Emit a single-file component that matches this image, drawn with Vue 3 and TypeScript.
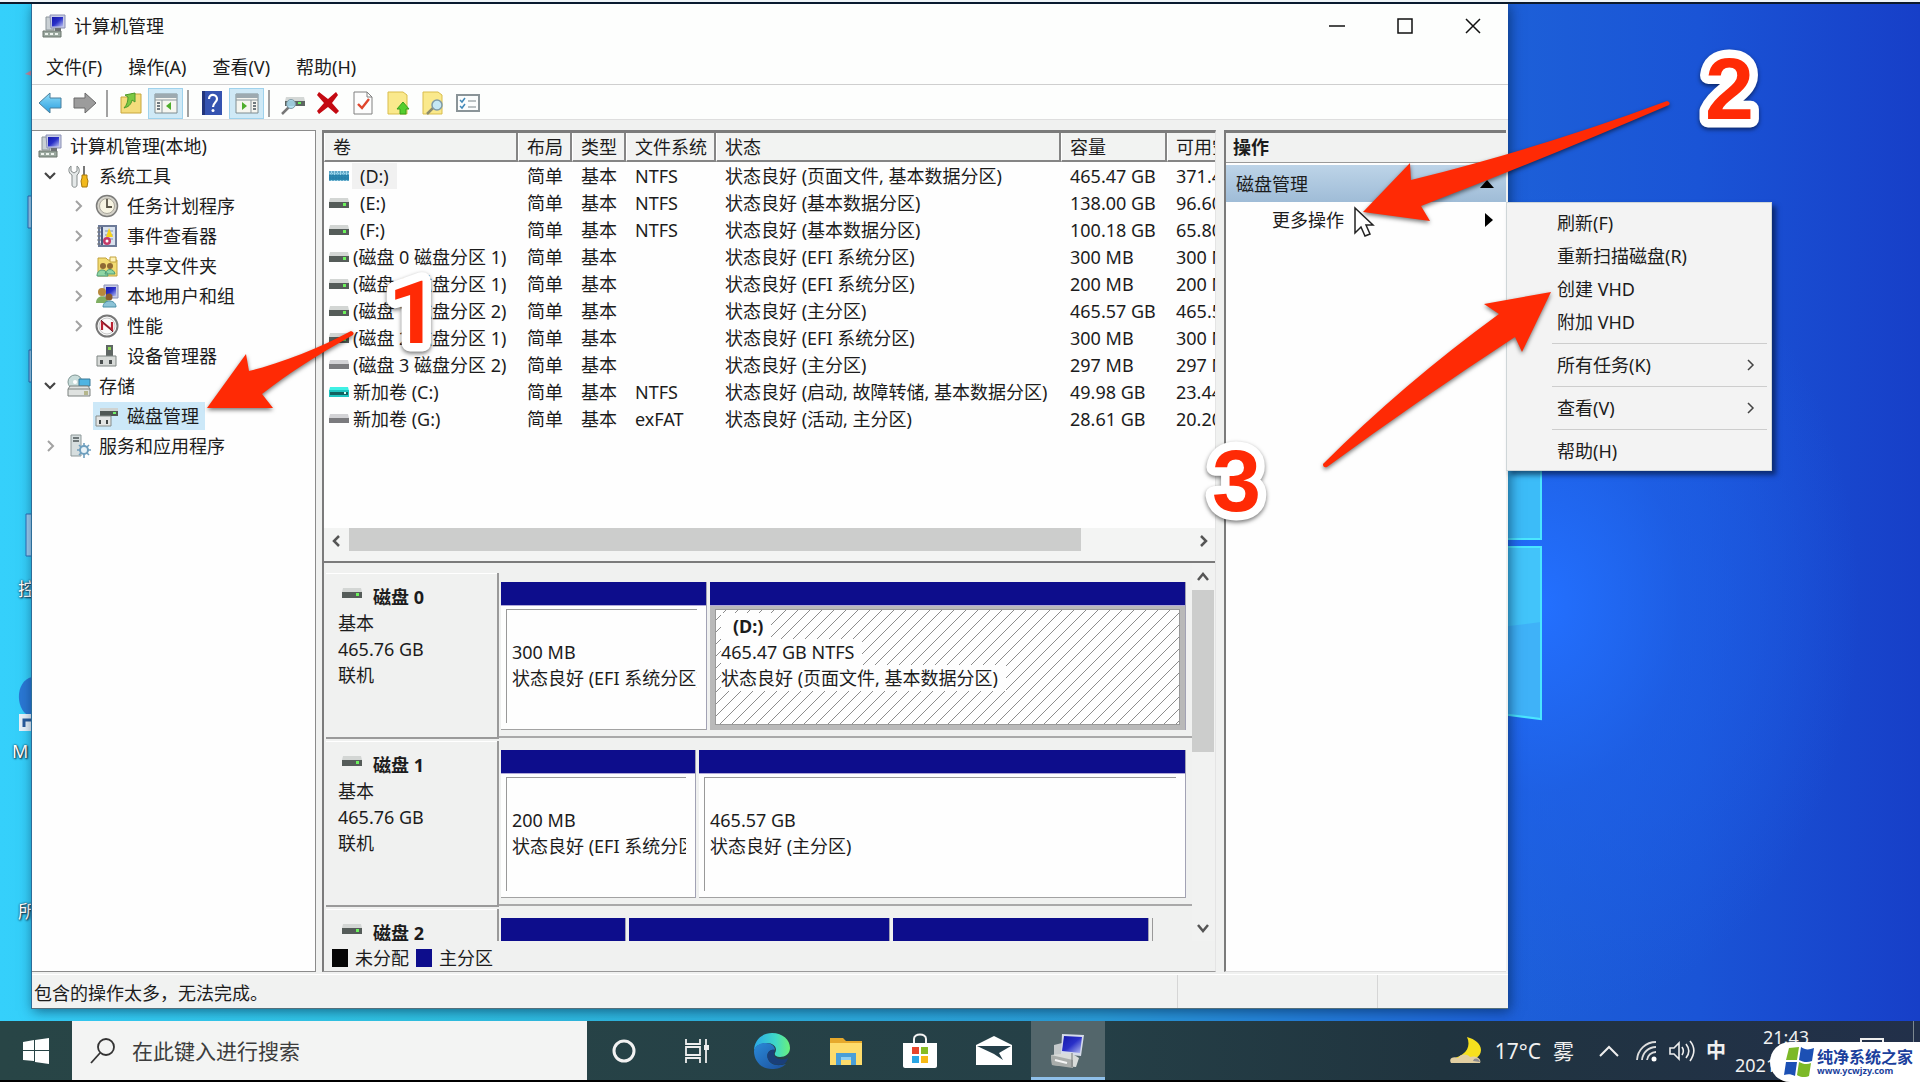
<script setup lang="ts">
import { ref } from 'vue'

interface Tool { icon: string; label: string; on?: boolean; sepAfter?: boolean }
interface TreeItem { label: string; icon: string; level: number; arrow?: 'open' | 'closed'; selected?: boolean }
interface Volume { icon: string; name: string; fs: string; status: string; size: string; free: string; drive?: boolean; focus?: boolean }
interface Partition { share: number; name?: string; size?: string; status?: string; hatched?: boolean; blank?: boolean }
interface Disk { name: string; size: string; parts: Partition[] }

const menus = ['文件(F)', '操作(A)', '查看(V)', '帮助(H)']

const tools: Tool[] = [
  { icon: 't-back', label: '后退' },
  { icon: 't-forward', label: '前进', sepAfter: true },
  { icon: 't-folder', label: '上一级' },
  { icon: 't-tree', label: '显示控制台树', on: true, sepAfter: true },
  { icon: 't-help', label: '帮助' },
  { icon: 't-pane', label: '显示操作窗格', on: true, sepAfter: true },
  { icon: 't-drive', label: '重新扫描' },
  { icon: 't-delete', label: '删除' },
  { icon: 't-props', label: '属性' },
  { icon: 't-up', label: '打开' },
  { icon: 't-find', label: '浏览' },
  { icon: 't-list', label: '设置' },
]

const tree: TreeItem[] = [
  { label: '计算机管理(本地)', icon: 'i-computer', level: 0 },
  { label: '系统工具', icon: 'i-tools', level: 1, arrow: 'open' },
  { label: '任务计划程序', icon: 'i-clock', level: 2, arrow: 'closed' },
  { label: '事件查看器', icon: 'i-event', level: 2, arrow: 'closed' },
  { label: '共享文件夹', icon: 'i-share', level: 2, arrow: 'closed' },
  { label: '本地用户和组', icon: 'i-users', level: 2, arrow: 'closed' },
  { label: '性能', icon: 'i-perf', level: 2, arrow: 'closed' },
  { label: '设备管理器', icon: 'i-device', level: 2 },
  { label: '存储', icon: 'i-storage', level: 1, arrow: 'open' },
  { label: '磁盘管理', icon: 'i-disk', level: 2, selected: true },
  { label: '服务和应用程序', icon: 'i-services', level: 1, arrow: 'closed' },
]

const volumes: Volume[] = [
  { icon: 'd-sel', name: '(D:)', fs: 'NTFS', status: '状态良好 (页面文件, 基本数据分区)', size: '465.47 GB', free: '371.44 GB', drive: true, focus: true },
  { icon: 'd-on', name: '(E:)', fs: 'NTFS', status: '状态良好 (基本数据分区)', size: '138.00 GB', free: '96.60 GB', drive: true },
  { icon: 'd-on', name: '(F:)', fs: 'NTFS', status: '状态良好 (基本数据分区)', size: '100.18 GB', free: '65.80 GB', drive: true },
  { icon: 'd-on', name: '(磁盘 0 磁盘分区 1)', fs: '', status: '状态良好 (EFI 系统分区)', size: '300 MB', free: '300 MB' },
  { icon: 'd-on', name: '(磁盘 1 磁盘分区 1)', fs: '', status: '状态良好 (EFI 系统分区)', size: '200 MB', free: '200 MB' },
  { icon: 'd-on', name: '(磁盘 1 磁盘分区 2)', fs: '', status: '状态良好 (主分区)', size: '465.57 GB', free: '465.57 GB' },
  { icon: 'd-on', name: '(磁盘 2 磁盘分区 1)', fs: '', status: '状态良好 (EFI 系统分区)', size: '300 MB', free: '300 MB' },
  { icon: 'd-off', name: '(磁盘 3 磁盘分区 2)', fs: '', status: '状态良好 (主分区)', size: '297 MB', free: '297 MB' },
  { icon: 'd-sys', name: '新加卷 (C:)', fs: 'NTFS', status: '状态良好 (启动, 故障转储, 基本数据分区)', size: '49.98 GB', free: '23.44 GB' },
  { icon: 'd-off', name: '新加卷 (G:)', fs: 'exFAT', status: '状态良好 (活动, 主分区)', size: '28.61 GB', free: '20.20 GB' },
]

const disks: Disk[] = [
  {
    name: '磁盘 0', size: '465.76 GB', parts: [
      { share: 205, size: '300 MB', status: '状态良好 (EFI 系统分区)' },
      { share: 475, name: '(D:)', size: '465.47 GB NTFS', status: '状态良好 (页面文件, 基本数据分区)', hatched: true },
    ],
  },
  {
    name: '磁盘 1', size: '465.76 GB', parts: [
      { share: 194, size: '200 MB', status: '状态良好 (EFI 系统分区)' },
      { share: 486, size: '465.57 GB', status: '状态良好 (主分区)' },
    ],
  },
  {
    name: '磁盘 2', size: '', parts: [
      { share: 124 }, { share: 260 }, { share: 255 }, { share: 33, blank: true },
    ],
  },
]

const menuGroups = [
  [{ label: '刷新(F)' }, { label: '重新扫描磁盘(R)' }, { label: '创建 VHD' }, { label: '附加 VHD' }],
  [{ label: '所有任务(K)', sub: true }],
  [{ label: '查看(V)', sub: true }],
  [{ label: '帮助(H)' }],
] as { label: string; sub?: boolean }[][]

const apps = [
  { icon: 'a-cortana', label: 'Cortana' },
  { icon: 'a-tasks', label: '任务视图' },
  { icon: 'a-edge', label: 'Microsoft Edge' },
  { icon: 'a-explorer', label: '文件资源管理器' },
  { icon: 'a-store', label: 'Microsoft Store' },
  { icon: 'a-mail', label: '邮件' },
  { icon: 'a-mmc', label: '计算机管理', active: true },
]

const query = ref('')
</script>

<template>
  <svg class="sprite" aria-hidden="true">
    <defs>
      <linearGradient id="g-screen" x1="0" y1="0" x2="1" y2="1">
        <stop offset="0" stop-color="#1418a8" /><stop offset=".5" stop-color="#2a30c8" /><stop offset="1" stop-color="#b8c0f0" />
      </linearGradient>
      <linearGradient id="g-blue" x1="0" y1="0" x2="0" y2="1">
        <stop offset="0" stop-color="#8fdcf8" /><stop offset="1" stop-color="#2a9fe0" />
      </linearGradient>
      <linearGradient id="g-edge" x1="0" y1="0" x2="1" y2="0">
        <stop offset="0" stop-color="#2aa8e8" /><stop offset=".6" stop-color="#3fd8c8" /><stop offset="1" stop-color="#6af07a" />
      </linearGradient>
      <linearGradient id="g-edge2" x1="0" y1="0" x2="1" y2="1">
        <stop offset="0" stop-color="#2a8ad8" /><stop offset="1" stop-color="#1c4f9c" />
      </linearGradient>
      <pattern id="g-hatch" width="12" height="12" patternUnits="userSpaceOnUse">
        <path d="M-2 14L14 -2M-2 2L2 -2M10 14L14 10" stroke="#8c8c8c" fill="none" />
      </pattern>

      <symbol id="i-computer" viewBox="0 0 24 24">
        <path d="M4 3h8v13H4z" fill="#c9d0d4" stroke="#8b9499" />
        <path d="M8 1h15v13H9z" fill="#c7cbe6" stroke="#8a90b4" />
        <path d="M10 3h11v9.500H10z" fill="url(#g-screen)" />
        <path d="M1 17h18v6H1z" fill="#9aa79e" stroke="#6c776f" />
        <path d="M3 20h3M8 20h3M13 20h3" stroke="#eef3ee" stroke-width="2" />
        <path d="M13 14h6v3h-6z" fill="#6e7275" />
      </symbol>
      <symbol id="i-tools" viewBox="0 0 24 24">
        <path d="M4 2v5l3 2 3-2V2c3 2 3 7 0 9v10c0 3-5 3-5 0V11C1 9 1 4 4 2z" fill="#e4e8e8" stroke="#868c8c" />
        <path d="M17 2v9" stroke="#777" stroke-width="2" /><path d="M15 11h5v3l1 3-1 6h-5l-1-6 1-3z" fill="#f2b91c" stroke="#a8780c" />
      </symbol>
      <symbol id="i-clock" viewBox="0 0 24 24">
        <circle cx="12" cy="12" r="10.500" fill="#d5d3ca" stroke="#7c7c7a" stroke-width="1.500" /><circle cx="12" cy="12" r="7.500" fill="#f7f4e2" stroke="#aaa79c" />
        <path d="M12 5v8h5" fill="none" stroke="#5a5648" stroke-width="1.800" />
      </symbol>
      <symbol id="i-event" viewBox="0 0 24 24">
        <path d="M4 2h17v20H4z" fill="#d9e2ee" stroke="#6c7a98" stroke-width="2" /><path d="M7 3v18" stroke="#4b5a80" stroke-width="2" />
        <path d="M2 4h4M2 8h4M2 12h4M2 16h4M2 20h4" stroke="#777" /><path d="M10 7h8M10 11h8M10 15h8" stroke="#7d91b5" />
        <path d="M14 4l4 9h-7z" fill="#f6d21c" /><circle cx="12" cy="17" r="4" fill="#c43a68" /><circle cx="12" cy="17" r="1.500" fill="#fff" />
      </symbol>
      <symbol id="i-share" viewBox="0 0 24 24">
        <path d="M3 4h8l2 2h9v16H3z" fill="#f3dc72" stroke="#c2a23c" /><path d="M15 3h6v5h-6z" fill="#fff3b8" stroke="#c2a23c" />
        <circle cx="8" cy="12" r="3" fill="#8f6a34" /><circle cx="15" cy="12" r="3" fill="#8f6a34" />
        <path d="M2 22c0-8 10-8 11 0zM10 20c1-6 9-6 10 0z" fill="#8fd6a4" stroke="#4d9a78" />
      </symbol>
      <symbol id="i-users" viewBox="0 0 24 24">
        <path d="M9 1h14v13H9z" fill="#c7cbe6" stroke="#8a90b4" /><path d="M11 3h10v9H11z" fill="url(#g-screen)" />
        <circle cx="7" cy="8" r="4" fill="#b8883c" /><path d="M1 19c0-9 12-9 12 0z" fill="#7fae62" />
        <circle cx="14" cy="13" r="3.500" fill="#8a5c2c" /><path d="M8 23c0-8 13-8 13 0z" fill="#8cc3d6" stroke="#4a8fa8" />
      </symbol>
      <symbol id="i-perf" viewBox="0 0 24 24">
        <circle cx="12" cy="12" r="10.500" fill="#fbfbfb" stroke="#777" stroke-width="2" /><circle cx="12" cy="12" r="8" fill="none" stroke="#c9c9c9" />
        <path d="M7 16V8l10 8V8" fill="none" stroke="#b82232" stroke-width="2.200" /><path d="M6 6l12 12" stroke="#6c2430" />
      </symbol>
      <symbol id="i-device" viewBox="0 0 24 24">
        <path d="M11 1h7v13h-7z" fill="#5f6664" /><path d="M13 3h3v3h-3z" fill="#8fd85a" />
        <path d="M2 12h19v10H2z" fill="#d7dad8" stroke="#7f8583" /><path d="M5 16h3v4H5zM14 16h3v4h-3z" fill="#4b5050" />
      </symbol>
      <symbol id="i-storage" viewBox="0 0 24 24">
        <circle cx="8" cy="8" r="7" fill="#c8dcda" stroke="#7f9694" /><circle cx="8" cy="8" r="2" fill="#fff" />
        <path d="M12 5h11v7H12z" fill="#4fb4e2" stroke="#3b7896" /><path d="M1 15l2-3h18l2 3v7H1z" fill="#dfe2e0" stroke="#7c8280" />
        <path d="M1 15h22" stroke="#7c8280" /><path d="M18 17v4M20 17v4" stroke="#8a8a3a" />
      </symbol>
      <symbol id="i-disk" viewBox="0 0 24 24">
        <path d="M5 4h18v3H5z" fill="#cfd3d1" /><path d="M5 7h18v5H5z" fill="#4f5653" /><path d="M18 8h3v2h-3z" fill="#6ff06a" />
        <path d="M1 12h15v10H1z" fill="#e3e5e4" stroke="#858b89" /><path d="M4 16h2v4H4zM11 16h2v4h-2z" fill="#3f4444" />
      </symbol>
      <symbol id="i-services" viewBox="0 0 24 24">
        <path d="M4 1h10v21H4z" fill="#d6dedf" stroke="#8d9899" /><path d="M6 4h6M6 7h6" stroke="#4c5658" stroke-width="1.500" />
        <circle cx="17" cy="16" r="4" fill="#e8f2f8" stroke="#6f9fbe" stroke-width="2" />
        <path d="M17 9v3M17 20v4M10 16h3M21 16h3M12 11l2 2M20 19l2 2M22 11l-2 2M14 19l-2 2" stroke="#6f9fbe" stroke-width="1.600" />
      </symbol>

      <symbol id="d-on" viewBox="0 0 20 10"><path d="M1 0h18l1 4H0z" fill="#d3d6d4" /><path d="M0 4h20v6H0z" fill="#555c59" /><path d="M14 5h3v3h-3z" fill="#6cf25c" /></symbol>
      <symbol id="d-off" viewBox="0 0 20 10"><path d="M1 0h18l1 4H0z" fill="#d3d3d6" /><path d="M0 4h20v5H0z" fill="#7b7b7e" /></symbol>
      <symbol id="d-sys" viewBox="0 0 20 10"><path d="M1 0h18l1 4H0z" fill="#3ff0e4" /><path d="M0 3h20v7H0z" fill="#1fc4c0" /><path d="M1 5h18v3H1z" fill="#14605f" /><path d="M15 5h2v2h-2z" fill="#d4fff4" /></symbol>
      <symbol id="d-sel" viewBox="0 0 20 10">
        <path d="M0 0h20v10H0z" fill="#9fd6ea" /><path d="M0 4h20v5H0z" fill="#2a86ae" />
        <path d="M1 0v10M4 0v10M7 0v10M10 0v10M13 0v10M16 0v10M19 0v10" stroke="#2479a4" stroke-dasharray="2 1" /><path d="M0 3h20" stroke="#3d9bc0" stroke-dasharray="1 1" />
      </symbol>

      <symbol id="t-back" viewBox="0 0 24 24"><path d="M1 12L12 2v5h11v10H12v5z" fill="url(#g-blue)" stroke="#4a7f9c" /></symbol>
      <symbol id="t-forward" viewBox="0 0 24 24"><path d="M23 12L12 2v5H1v10h11v5z" fill="#9c9c9c" stroke="#6a6a6a" /></symbol>
      <symbol id="t-folder" viewBox="0 0 24 24"><path d="M2 6h8l2-3h10v19H2z" fill="#f4dc7c" stroke="#c8a63c" /><path d="M5 17c4-1 7-3 8-8l3 2V2L6 4l3 2c0 4-1 8-4 11z" fill="#7cc842" stroke="#4c9a2c" /></symbol>
      <symbol id="t-tree" viewBox="0 0 24 24"><path d="M1 3h22v19H1z" fill="#f6f6f0" stroke="#7f8c90" /><path d="M1 3h22v4H1z" fill="#9daab0" /><path d="M1 9h22" stroke="#8b979c" /><path d="M3 12h3M3 15h3M3 18h3" stroke="#46525a" stroke-width="1.500" /><path d="M8 9v13" stroke="#8b979c" /><path d="M17 11v8l-5-4z" fill="#4fae2c" /></symbol>
      <symbol id="t-pane" viewBox="0 0 24 24"><path d="M1 3h22v19H1z" fill="#f6f6f0" stroke="#7f8c90" /><path d="M1 3h22v4H1z" fill="#9daab0" /><path d="M1 9h22" stroke="#8b979c" /><path d="M18 12h3M18 15h3M18 18h3" stroke="#46525a" stroke-width="1.500" /><path d="M16 9v13" stroke="#8b979c" /><path d="M7 11v8l5-4z" fill="#4fae2c" /></symbol>
      <symbol id="t-help" viewBox="0 0 24 24"><path d="M2 0h20v24H2z" fill="#3553b0" /><path d="M2 0h3v24H2z" fill="#22357c" /><path d="M9 8c0-6 8-5 8 0 0 3-4 4-4 8" fill="none" stroke="#fff" stroke-width="2.200" /><circle cx="13" cy="19.500" r="1.500" fill="#fff" /></symbol>
      <symbol id="t-drive" viewBox="0 0 24 24"><path d="M5 6h18l1 4H4z" fill="#d4d8d6" /><path d="M4 10h20v5H4z" fill="#5d6662" /><path d="M17 11h3v2h-3z" fill="#66ee5a" /><path d="M1 23l7-7" stroke="#777" stroke-width="2.500" /><circle cx="10" cy="13" r="4.500" fill="#a8dcf0" fill-opacity=".85" stroke="#7f9aa6" /></symbol>
      <symbol id="t-delete" viewBox="0 0 24 24"><path d="M3 1l9 7 8-7 2 3-6 8 7 8-3 3-8-7-9 7-2-3 7-8-7-8z" fill="#c40a12" /></symbol>
      <symbol id="t-props" viewBox="0 0 24 24"><path d="M3 1h13l5 5v17H3z" fill="#fdfdfd" stroke="#808080" /><path d="M16 1v5h5" fill="none" stroke="#808080" /><path d="M7 13l4 4 7-9" fill="none" stroke="#e0452c" stroke-width="2.400" /></symbol>
      <symbol id="t-up" viewBox="0 0 24 24"><path d="M2 1h15l4 3v19H2z" fill="#fae98c" stroke="#d9bd4c" /><path d="M14 23v-5h-3l6-7 6 7h-3v5z" fill="#55cf2e" stroke="#3a9f1f" /></symbol>
      <symbol id="t-find" viewBox="0 0 24 24"><path d="M2 1h15l4 3v19H2z" fill="#fae98c" stroke="#d9bd4c" /><path d="M6 23l7-7" stroke="#8d8d6c" stroke-width="2.500" /><circle cx="16" cy="14" r="5" fill="#c5e8f4" stroke="#7f9aa6" stroke-width="1.500" /></symbol>
      <symbol id="t-list" viewBox="0 0 24 24"><path d="M1 4h22v16H1z" fill="#fbfdfd" stroke="#8a9498" stroke-width="2" /><path d="M4 9l2 2 3-4M4 15l2 2 3-4" fill="none" stroke="#3f88b8" stroke-width="1.500" /><path d="M12 10h8M12 16h8" stroke="#a5adb0" stroke-width="1.500" /></symbol>

      <symbol id="a-cortana" viewBox="0 0 36 36"><circle cx="18" cy="18" r="10" fill="none" stroke="#f2f2f2" stroke-width="3" /></symbol>
      <symbol id="a-tasks" viewBox="0 0 36 36"><path d="M6 6v5h14V6M6 30v-5h14v5M6 14h14v8H6zM26 6v24" fill="none" stroke="#eee" stroke-width="1.800" /><path d="M24 12h5v5h-5z" fill="#eee" /></symbol>
      <symbol id="a-edge" viewBox="0 0 36 36">
        <path d="M0 18C0 7 8 0 18 0c11 0 18 7 18 15 0 6-5 9-10 9-4 0-6-2-5-4 3-5-1-10-8-10C6 10 1 13 0 18z" fill="url(#g-edge)" />
        <path d="M0 18c1-5 6-8 12-8 5 0 9 3 9 7-6-1-9 4-7 9 2 5 8 8 18 5-4 4-9 5-14 5C7 36 0 28 0 18z" fill="url(#g-edge2)" />
        <path d="M14 26c-2-5 1-10 7-9-2 4-1 8 4 9 4 1 7 0 9-1-1 3-2 5-4 6-7 2-14 0-16-5z" fill="#1a3f78" />
      </symbol>
      <symbol id="a-explorer" viewBox="0 0 36 36"><path d="M2 5h13l3 3h16v24H2z" fill="#e6a92c" /><path d="M2 10h32v22H2z" fill="#fddc6c" /><path d="M8 20h20v12h-5v-5h-10v5H8z" fill="#4a9fd8" /><path d="M13 24h10v3H13z" fill="#8fd0f4" /></symbol>
      <symbol id="a-store" viewBox="0 0 36 36"><path d="M12 11V6c0-6 12-6 12 0v5" fill="none" stroke="#f4f4f4" stroke-width="2" /><path d="M1 10h34v23c0 1-1 2-2 2H3c-1 0-2-1-2-2z" fill="#fff" /><path d="M10 14h7v7h-7z" fill="#e8452c" /><path d="M19 14h7v7h-7z" fill="#86bc24" /><path d="M10 23h7v7h-7z" fill="#2aa6e4" /><path d="M19 23h7v7h-7z" fill="#f7b916" /></symbol>
      <symbol id="a-mail" viewBox="0 0 36 36"><path d="M0 12L18 3l18 9v20H0z" fill="#fff" /><path d="M1 13h34L23 20l4 7-9-6z" fill="#26404a" /></symbol>
      <symbol id="a-mmc" viewBox="0 0 36 36">
        <path d="M4 12l12-3v16L4 23z" fill="#c4c9cb" /><path d="M12 1l22 1-3 21-20-2z" fill="#d5dbea" /><path d="M14 3l18 1-2 16-18-2z" fill="url(#g-screen)" />
        <path d="M1 22l20-2 8 5-3 9-24-2z" fill="#d9dcda" /><path d="M1 22l22 5v8L2 32z" fill="#a9adab" /><path d="M5 27l12 3" stroke="#f5f5f5" stroke-width="2" /><path d="M22 20v14" stroke="#767a7a" />
      </symbol>
    </defs>
  </svg>

  <div class="desktop">
    <main class="workspace">
      <svg class="wallpaper" width="50" height="260" viewBox="0 0 50 260" aria-hidden="true">
        <path d="M0 0h40v78H0z" fill="#3cbcf8" /><path d="M0 78h40V0" fill="none" stroke="#4ae6ff" stroke-width="2" />
        <path d="M0 86h40v172L0 253z" fill="#3fb2f8" /><path d="M0 86h40v75L0 166z" fill="#42c4fa" />
        <path d="M0 86h40v172L0 253" fill="none" stroke="#4ae6ff" stroke-width="2" />
      </svg>
      <svg class="strip" width="32" height="760" viewBox="0 0 32 760" aria-hidden="true">
        <path d="M32 66l-7 4 7 2z" fill="#c88a9c" /><path d="M32 192h-4v32h4zM32 346h-3v32h3zM32 510h-6v42h6z" fill="#9fd0f2" stroke="#2a6fb8" />
        <path d="M32 673c-18 4-17 36 0 40z" fill="#2a78d4" /><path d="M19 710h13v17H19z" fill="#e8f2fa" /><path d="M24 723v-7h7" fill="none" stroke="#2a5c9c" stroke-width="3" />
      </svg>
      <span class="shortcut s1">控</span>
      <span class="shortcut s2">M</span>
      <span class="shortcut s3">所</span>

      <section class="window">
        <header class="titlebar">
          <svg class="ico24"><use href="#i-computer" /></svg>
          <h1>计算机管理</h1>
          <div class="winbtns">
            <button aria-label="最小化"><svg width="16" height="16"><path d="M0 8h16" stroke="#111" stroke-width="1.500" /></svg></button>
            <button aria-label="最大化"><svg width="16" height="16"><path d="M1 1h14v14H1z" fill="none" stroke="#111" stroke-width="1.500" /></svg></button>
            <button aria-label="关闭"><svg width="16" height="16"><path d="M1 1l14 14M15 1L1 15" stroke="#111" stroke-width="1.500" /></svg></button>
          </div>
        </header>
        <nav class="menubar"><button v-for="m in menus" :key="m">{{ m }}</button></nav>
        <div class="toolbar">
          <template v-for="t in tools" :key="t.icon">
            <button :class="{ on: t.on }" :aria-label="t.label"><svg class="ico24"><use :href="'#' + t.icon" /></svg></button>
            <i v-if="t.sepAfter" class="sep"></i>
          </template>
        </div>

        <div class="body">
          <aside class="tree">
            <ul>
              <li v-for="n in tree" :key="n.label" :class="['lv' + n.level, { selected: n.selected }]">
                <svg class="arrow" viewBox="0 0 14 14">
                  <path v-if="n.arrow === 'open'" d="M2 4l5 5 5-5" stroke="#444" stroke-width="2.200" fill="none" />
                  <path v-else-if="n.arrow === 'closed'" d="M5 2l5 5-5 5" stroke="#a2a2a2" stroke-width="2" fill="none" />
                </svg>
                <button><svg class="ico24"><use :href="'#' + n.icon" /></svg><span>{{ n.label }}</span></button>
              </li>
            </ul>
          </aside>

          <section class="center">
            <div class="volumes">
              <div class="tablewrap">
                <table>
                  <colgroup><col class="c1"><col class="c2"><col class="c2"><col class="c3"><col class="c4"><col class="c5"><col></colgroup>
                  <thead><tr><th>卷</th><th>布局</th><th>类型</th><th>文件系统</th><th>状态</th><th>容量</th><th>可用空间</th></tr></thead>
                  <tbody>
                    <tr v-for="v in volumes" :key="v.name">
                      <td class="name"><div><svg class="drive"><use :href="'#' + v.icon" /></svg><span :class="{ letter: v.drive, focus: v.focus }">{{ v.name }}</span></div></td>
                      <td>简单</td><td>基本</td><td>{{ v.fs }}</td><td>{{ v.status }}</td><td>{{ v.size }}</td><td>{{ v.free }}</td>
                    </tr>
                  </tbody>
                </table>
              </div>
              <div class="hscroll">
                <button aria-label="向左滚动"><svg width="14" height="14"><path d="M9 2L4 7l5 5" fill="none" stroke="#555" stroke-width="2.500" /></svg></button>
                <div class="track"><i></i></div>
                <button aria-label="向右滚动"><svg width="14" height="14"><path d="M5 2l5 5-5 5" fill="none" stroke="#555" stroke-width="2.500" /></svg></button>
              </div>
            </div>

            <div class="disks">
              <div class="disklist">
                <article v-for="d in disks" :key="d.name" class="disk">
                  <div class="label">
                    <h2><svg class="drive"><use href="#d-on" /></svg>{{ d.name }}</h2>
                    <template v-if="d.size"><p>基本</p><p>{{ d.size }}</p><p>联机</p></template>
                  </div>
                  <div class="parts">
                    <div v-for="(p, i) in d.parts" :key="i" :class="['part', { blank: p.blank, hatched: p.hatched }]" :style="{ flexGrow: p.share }">
                      <div class="bar"></div>
                      <div class="vol">
                        <svg v-if="p.hatched" class="hatch" width="100%" height="100%"><rect width="100%" height="100%" fill="url(#g-hatch)" /></svg>
                        <div v-if="p.size" class="inner">
                          <p class="pname"><b v-if="p.name">{{ p.name }}</b></p>
                          <p><span>{{ p.size }}</span></p>
                          <p><span>{{ p.status }}</span></p>
                        </div>
                      </div>
                    </div>
                  </div>
                </article>
              </div>
              <div class="vscroll">
                <button aria-label="向上滚动"><svg width="14" height="14"><path d="M2 10l5-6 5 6" fill="none" stroke="#555" stroke-width="2.500" /></svg></button>
                <div class="track"><i></i></div>
                <button aria-label="向下滚动"><svg width="14" height="14"><path d="M2 4l5 6 5-6" fill="none" stroke="#555" stroke-width="2.500" /></svg></button>
              </div>
            </div>
            <footer class="legend"><i class="black"></i><span>未分配</span><i class="navy"></i><span>主分区</span></footer>
          </section>

          <aside class="actions">
            <h2>操作</h2>
            <button class="group">磁盘管理<svg width="14" height="8"><path d="M0 8l7-8 7 8z" /></svg></button>
            <div class="more">
              <button>更多操作<svg width="8" height="14"><path d="M0 0l8 7-8 7z" /></svg></button>
              <div class="popup" role="menu">
                <div v-for="(g, gi) in menuGroups" :key="gi" class="pgroup">
                  <button v-for="it in g" :key="it.label" role="menuitem">{{ it.label }}<svg v-if="it.sub" width="8" height="12"><path d="M1 1l5 5-5 5" fill="none" stroke="#444" stroke-width="1.500" /></svg></button>
                </div>
              </div>
            </div>
          </aside>
        </div>
        <footer class="status"><span>包含的操作太多，无法完成。</span><span></span><span></span></footer>
      </section>
    </main>

    <footer class="taskbar">
      <button class="start" aria-label="开始"><svg width="26" height="26" viewBox="0 0 26 26"><path d="M0 4l11-2v10H0zM12 2l14-2v12H12zM0 13h11v10L0 22zM12 13h14v13l-14-2z" fill="#fff" /></svg></button>
      <label class="search">
        <svg width="26" height="26" viewBox="0 0 26 26"><circle cx="16" cy="9" r="8" fill="none" stroke="#333" stroke-width="1.800" /><path d="M10 15L1 25" stroke="#333" stroke-width="1.800" /></svg>
        <input v-model="query" type="text" placeholder="在此键入进行搜索" aria-label="在此键入进行搜索">
      </label>
      <button v-for="a in apps" :key="a.icon" :class="['app', { active: a.active }]" :aria-label="a.label"><svg width="36" height="36"><use :href="'#' + a.icon" /></svg></button>
      <div class="tray">
        <button class="weather">
          <svg width="34" height="30" viewBox="0 0 34 30"><path d="M18 1c4 9 0 17-12 21 8 5 26 3 26-8 0-6-6-11-14-13z" fill="#f6e01e" /><path d="M2 27c-3-5 3-7 7-5 3-5 10-4 12-1 6-2 12 2 10 6z" fill="#e2cfa2" /><path d="M24 25c1-4 6-3 7 1z" fill="#8c8c90" /></svg>
          <span>17°C</span><span>雾</span>
        </button>
        <button class="caret" aria-label="显示隐藏的图标"><svg width="20" height="12"><path d="M1 11l9-9 9 9" fill="none" stroke="#eee" stroke-width="2" /></svg></button>
        <button aria-label="网络"><svg width="22" height="22" viewBox="0 0 22 22"><g fill="none" stroke="#ddd" stroke-width="1.800"><path d="M1 20A19 19 0 0 1 20 2" /><path d="M6 20A14 14 0 0 1 20 7" /><path d="M11 20a9 9 0 0 1 9-8" /></g><circle cx="18" cy="19" r="2.500" fill="#fff" /></svg></button>
        <button aria-label="音量"><svg width="26" height="22" viewBox="0 0 26 22"><g fill="none" stroke="#eee" stroke-width="1.600"><path d="M1 8h4l5-5v16l-5-5H1zM13 7c2 3 2 5 0 8M17 4c4 5 4 9 0 14M21 1c5 6 5 13 0 20" /></g></svg></button>
        <button class="ime">中</button>
        <div class="clock"><time>21:43</time><time>2021</time></div>
        <button class="notice" aria-label="通知"><svg width="24" height="26" viewBox="0 0 24 26"><path d="M1 1h22v17H1z" fill="none" stroke="#eee" stroke-width="2" /></svg></button>
        <i class="peek"></i>
      </div>
      <div class="badge">
        <svg width="30" height="30" viewBox="0 0 30 30"><path d="M5 1l10-1-2 13H2z" fill="#7cb928" /><path d="M17 0c4 3 8 3 13 1l-2 13c-5 2-9 1-13-1z" fill="#1c50b4" /><path d="M2 15h11l-2 14c-4-2-7-2-11-1z" fill="#1c50b4" /><path d="M15 15c4 2 8 3 12 1l-2 13c-5 2-9 1-12-1z" fill="#7cb928" /></svg>
        <div><strong>纯净系统之家</strong><a href="#">www.ycwjzy.com</a></div>
      </div>
    </footer>

    <svg class="notes" viewBox="0 0 1920 1082" aria-hidden="true">
      <path d="M1355 208v25l6-6 4 9 5-2-4-9h7z" fill="#fff" stroke="#222" stroke-width="1.500" />
      <g fill="#ff2a05" class="lift">
        <path d="M207 408L246 354l3 17c36-9 70-23 102-40q4 1 2 4c-34 19-64 38-91 59l11 14z" />
        <path d="M1363 212l47-49 1 17q130-32 256-79 4 1 2 4-128 55-248 101l9 15z" />
        <path d="M1551 292l-67 12 15 10q-96 70-176 150 0 4 4 3 90-66 188-130l7 15z" />
      </g>
      <g class="digit lift">
        <text x="388" y="343" class="one">1</text>
        <text x="1705" y="119">2</text>
        <text x="1212" y="511">3</text>
      </g>
    </svg>
  </div>
</template>

<style>
html, body { margin: 0; background: #000; }
</style>

<style scoped>
* { box-sizing: border-box; }
.sprite { position: absolute; width: 0; height: 0; }
.desktop {
  position: relative; display: flex; flex-direction: column; min-height: 100vh; overflow: hidden;
  border-top: 2px solid #eef4f8;
  font: 18px/26px "Noto Sans", "Noto Sans CJK SC", sans-serif; color: #1c1c1c;
}
button { font: inherit; color: inherit; background: none; border: 0; padding: 0; margin: 0; text-align: left; }
h1, h2, p, ul { margin: 0; padding: 0; font: inherit; list-style: none; }
svg { display: block; flex: none; }
.ico24 { width: 24px; height: 24px; }
.drive { width: 20px; height: 10px; }

.workspace {
  position: relative; display: flex; flex: 1; padding: 0 412px 12px 31px; border-top: 2px solid #0c1a2c;
  background:
    radial-gradient(ellipse 320px 420px at 1540px 600px, #2370ff, #1f62ec99 45%, transparent 100%),
    linear-gradient(90deg, #35d0fb 0, #30c4e4 400px, #2a9cd8 1100px, #1d60d8 1500px, #1a54d6 1700px, #173fc8 100%);
}
.wallpaper { position: absolute; left: 1501px; top: 457px; }
.strip { position: absolute; left: 0; top: 0; }
.shortcut { position: absolute; color: #fff; text-shadow: 1px 1px 2px #123, 0 0 2px #123; }
.s1 { left: 18px; top: 572px; }
.s2 { left: 12px; top: 734px; }
.s3 { left: 18px; top: 894px; }

.window {
  position: relative; flex: 1; min-width: 0; display: flex; flex-direction: column; background: #fdfefd;
  border-left: 1px solid #2c6c98; border-bottom: 1px solid #54707c; box-shadow: 2px 2px 12px #00204099;
}
.titlebar { display: flex; align-items: center; height: 46px; padding: 0 27px 2px 10px; gap: 8px; }
.winbtns { display: flex; gap: 52px; margin-left: auto; }
.menubar { display: flex; gap: 26px; height: 35px; padding-left: 14px; align-items: center; border-bottom: 1px solid #cfcfcf; }
.toolbar { display: flex; align-items: center; height: 35px; padding: 2px 0 0 0; border-bottom: 1px solid #dedede; }
.toolbar button { width: 35px; height: 31px; display: grid; place-items: center; border: 1px solid transparent; }
.toolbar button.on { background: #cfe9f6; border-color: #9fd2ec; }
.sep { width: 2px; height: 27px; margin: 0 5px 0 4px; background: #a2a2a2; }

.body { flex: 1; display: grid; grid-template-columns: 284px 1fr 282px; column-gap: 6px; padding: 10px 2px 2px 0; background: #f0f1f0; min-height: 0; }
.tree { background: #fefefe; border: 1px solid #8b8b8b; border-left: 0; }
.tree li { display: flex; align-items: center; height: 30px; }
.tree button { display: flex; align-items: center; gap: 8px; height: 28px; padding: 0 6px 0 2px; white-space: nowrap; }
.arrow { width: 14px; height: 14px; margin-right: 8px; }
.lv0 .arrow { display: none; }
.lv0 { padding-left: 4px; }
.lv1 { padding-left: 11px; }
.lv2 { padding-left: 39px; }
.selected button { background: #cce8f8; }

.center { display: flex; flex-direction: column; min-width: 0; margin-right: 2px; border: 2px solid #7b7b7b; border-width: 3px 1px 1px 2px; border-right-color: #e4e4e4; border-bottom-color: #9a9a9a; }
.volumes { display: flex; flex-direction: column; height: 430px; background: #fefefe; border-bottom: 2px solid #7b7b7b; }
.tablewrap { flex: 1; overflow: hidden; }
table { width: 100%; table-layout: fixed; border-collapse: separate; border-spacing: 0; }
.c1 { width: 194px; } .c2 { width: 54px; } .c3 { width: 90px; } .c4 { width: 345px; } .c5 { width: 106px; }
th { height: 29px; padding: 0 0 0 8px; font-weight: 400; text-align: left; white-space: nowrap; overflow: hidden; background: #f2f3f2; border: solid #858585; border-width: 0 2px 2px 0; border-left: 1px solid #fff; }
th:last-child { border-right: 0; }
td { height: 27px; padding: 0 0 0 9px; white-space: nowrap; overflow: hidden; }
td.name { padding-left: 5px; }
td.name div { display: flex; align-items: center; gap: 3px; }
.name span { padding-left: 1px; }
.name .letter { padding: 0 8px; }
.name .focus { background: #f1f1f1; }
.hscroll { display: flex; height: 33px; padding-bottom: 8px; background: #f3f4f3; }
.hscroll button { width: 25px; display: grid; place-items: center; }
.hscroll .track { flex: 1; padding-bottom: 2px; }
.hscroll .track i { display: block; width: 87%; height: 100%; background: #cccdcc; }

.disks { flex: 1 1 0; display: flex; min-height: 0; background: #f0f1f0; overflow: hidden; }
.disklist { flex: 1; min-width: 0; height: 0; padding: 10px 0 0 2px; }
.disk { display: flex; height: 168px; }
.label { width: 173px; height: 166px; padding: 11px 0 0 12px; border: solid #9a9a9a; border-width: 0 2px 2px 0; box-shadow: inset 0 1px #fff; }
.label h2 { display: flex; gap: 11px; padding-left: 4px; font-weight: 700; }
.label h2 svg { margin-top: 4px; }
.label p { height: 26px; }
.parts { flex: 1; display: flex; gap: 3px; height: 165px; padding: 9px 6px 6px 2px; border-bottom: 2px solid #a9a9a9; min-width: 0; }
.part { flex: 1 1 0; min-width: 0; display: flex; flex-direction: column; border-right: 1px solid #a2a2b4; }
.part.blank { border-left: 1px solid #999; border-right: 0; }
.part.blank > * { visibility: hidden; }
.bar { height: 24px; background: #0d0d8c; border-bottom: 1px solid #b0a8d8; }
.vol { position: relative; flex: 1; min-height: 0; background: #fefefe; border-bottom: 1px solid #a2a2a2; padding: 3px 9px 6px 5px; }
.inner { height: 100%; padding: 3px 0 0 5px; border: solid #999; border-width: 1px 0 0 1px; overflow: hidden; }
.inner p { height: 26px; white-space: nowrap; }
.hatched .vol { border: solid #b9b9b9; border-width: 3px 5px 5px; padding: 0; }
.hatch { position: absolute; left: 0; top: 0; }
.hatched .inner { position: relative; border: 1px solid #999; }
.hatched span, .hatched b { display: inline-block; background: #fefefe; padding-right: 8px; }
.hatched .pname b { padding-left: 12px; }
.vscroll { display: flex; flex-direction: column; width: 23px; padding-right: 1px; background: #f1f2f1; }
.vscroll button { height: 27px; display: grid; place-items: center; }
.vscroll .track { flex: 1; }
.vscroll .track i { display: block; height: 50%; background: #cccdcc; }
.legend { display: flex; align-items: center; height: 30px; padding: 3px 0 0 8px; gap: 7px; background: #f0f1f0; position: relative; }
.legend i { width: 16px; height: 18px; }
.legend .black { background: #050505; }
.legend .navy { background: #0d0d8c; }

.actions { background: #fefefe; border: solid #7b7b7b; border-width: 3px 0 1px 2px; border-bottom-color: #ddd; }
.actions h2 { height: 30px; line-height: 29px; padding-left: 7px; font-weight: 700; background: #f1f2f1; border-bottom: 1px solid #9a9a9a; }
.group { display: flex; align-items: center; justify-content: space-between; width: 100%; height: 37px; margin-top: 2px; padding: 0 12px 0 10px; background: linear-gradient(#bdd4e8, #9fbcd7); }
.more { position: relative; }
.more > button { display: flex; align-items: center; justify-content: space-between; width: 100%; height: 36px; padding: 0 13px 0 46px; }
.popup { position: absolute; left: 100%; top: 0; width: 266px; padding: 3px 4px 3px 45px; background: #f3f3f3; border: 1px solid #cfd6d8; box-shadow: 4px 4px 5px #00103099; }
.pgroup + .pgroup { margin-top: 5px; padding-top: 4px; border-top: 1px solid #cdcdcd; }
.pgroup button { display: flex; align-items: center; justify-content: space-between; width: 100%; height: 33px; padding: 0 12px 0 5px; }

.status { display: flex; height: 34px; background: #f1f2f1; border-top: 1px solid #fff; line-height: 36px; }
.status span { width: 200px; border-left: 1px solid #d6d6d6; }
.status span:first-child { flex: 1; padding-left: 2px; border-left: 0; }
.status span:last-child { width: 131px; }

.taskbar { position: relative; display: flex; height: 61px; color: #f0f0f0; border-bottom: 2px solid #000; background: linear-gradient(90deg, #284546, #254047 55%, #20343f 75%, #22304a); }
.start { width: 72px; padding-left: 23px; }
.search { display: flex; align-items: center; gap: 16px; width: 515px; padding: 1px 0 0 18px; background: #f3f4f3; }
.search input { flex: 1; min-width: 0; padding: 0; border: 0; outline: 0; background: none; font: 21px/30px "Noto Sans", "Noto Sans CJK SC", sans-serif; }
.search input::placeholder { color: #3c3c3c; opacity: 1; }
.app { width: 74px; display: grid; place-items: center; }
.app.active { background: #53666b; box-shadow: inset 0 -3px #8fc0ea; }
.tray { display: flex; align-items: center; margin-left: auto; gap: 11px; font-size: 21px; height: 100%; }
.weather { display: flex; align-items: center; gap: 12px; margin-right: 14px; }
.caret { margin-right: 6px; }
.ime { font-weight: 700; font-size: 20px; margin-right: -14px; }
.clock { display: flex; flex-direction: column; align-items: flex-end; width: 88px; height: 100%; padding: 2px 2px 2px 0; font-size: 18px; line-height: 28px; }
.clock time:last-child { width: 100%; padding-left: 12px; }
.notice { margin: 0 18px 0 38px; }
.peek { width: 1px; height: 100%; margin-right: 6px; background: #7c8890; }
.badge { position: absolute; right: 0; top: 21px; bottom: -2px; width: 150px; display: flex; align-items: center; gap: 3px; padding-left: 14px; background: #fff; border-radius: 20px 0 0 20px; }
.badge div { display: flex; flex-direction: column; }
.badge strong { font-size: 16px; line-height: 18px; color: #1b3f9c; white-space: nowrap; }
.badge a { font: 700 9px/10px "Noto Sans", sans-serif; color: #1b3f9c; text-decoration: none; }

.notes { position: absolute; left: 0; top: -2px; width: 100%; pointer-events: none; }
.lift { filter: drop-shadow(0 2px 2px #0008); }
.digit text { font: 700 88px "Liberation Sans", sans-serif; fill: #ff2a05; stroke: #fff; stroke-width: 17px; stroke-linejoin: round; paint-order: stroke; }
.digit .one { font-family: Roboto, sans-serif; font-weight: 700; }
</style>
